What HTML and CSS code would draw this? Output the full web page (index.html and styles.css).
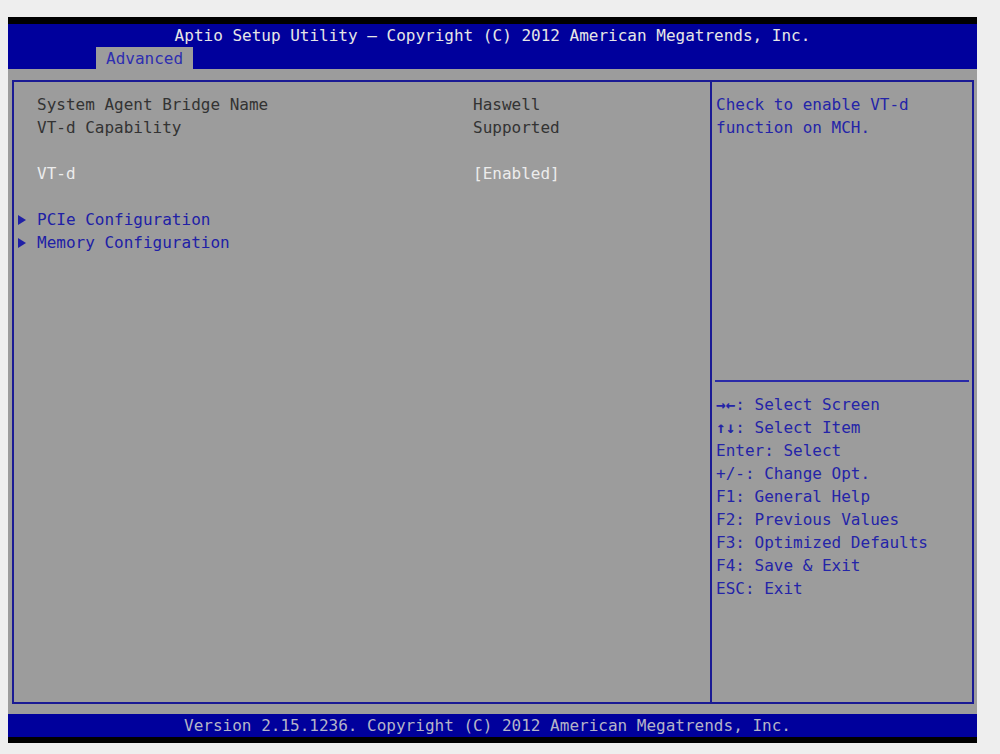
FILE: index.html
```html
<!DOCTYPE html>
<html lang="en">
<head>
    <meta charset="UTF-8">
    <title>Aptio Setup Utility - Advanced</title>
    <link rel="stylesheet" href="styles.css">
</head>
<body>
    <div id="screen">
        <div id="header">
            <div id="title">Aptio Setup Utility &ndash; Copyright (C) 2012 American Megatrends, Inc.</div>
            <div id="tabs">
                <div class="tab active">Advanced</div>
            </div>
        </div>

        <div id="main">
            <div id="frame">
                <div id="items">
                    <div class="row">
                        <span class="label">System Agent Bridge Name</span>
                        <span class="value">Haswell</span>
                    </div>
                    <div class="row">
                        <span class="label">VT-d Capability</span>
                        <span class="value">Supported</span>
                    </div>
                    <div class="row blank"></div>
                    <div class="row selected">
                        <span class="label">VT-d</span>
                        <span class="value">[Enabled]</span>
                    </div>
                    <div class="row blank"></div>
                    <div class="row submenu">
                        <span class="arrow"></span><span class="label">PCIe Configuration</span>
                    </div>
                    <div class="row submenu">
                        <span class="arrow"></span><span class="label">Memory Configuration</span>
                    </div>
                </div>

                <div id="side">
                    <div id="help">
                        Check to enable VT-d<br>
                        function on MCH.
                    </div>
                    <div id="keys">
                        <div><b>&rarr;&larr;</b>: Select Screen</div>
                        <div><b>&uarr;&darr;</b>: Select Item</div>
                        <div>Enter: Select</div>
                        <div>+/-: Change Opt.</div>
                        <div>F1: General Help</div>
                        <div>F2: Previous Values</div>
                        <div>F3: Optimized Defaults</div>
                        <div>F4: Save &amp; Exit</div>
                        <div>ESC: Exit</div>
                    </div>
                </div>
            </div>
        </div>

        <div id="footer">Version 2.15.1236. Copyright (C) 2012 American Megatrends, Inc.</div>
    </div>
</body>
</html>
```

FILE: styles.css
```css
body {
    margin: 0;
    padding: 17px 0 0 8px;
    background: #eeeeee;
    font-family: 'DejaVu Sans Mono', 'Liberation Mono', monospace;
    font-size: 16px;
    line-height: 23px;
}

#screen {
    width: 969px;
    display: flex;
    flex-direction: column;
}

#header {
    background: #00009c;
    border-top: 7px solid #000;
    height: 45px;
    display: flex;
    flex-direction: column;
}

#title {
    text-align: center;
    color: #e6e6e6;
}

#tabs {
    margin-top: auto;
    padding-left: 88px;
    display: flex;
}

.tab {
    height: 22px;
    line-height: 23px;
    padding: 0 10px;
    color: #2e2eb0;
}

.tab.active {
    background: #9c9c9c;
}

#main {
    background: #9c9c9c;
    height: 645px;
    padding: 11px 3px 10px 4px;
    box-sizing: border-box;
}

#frame {
    height: 100%;
    box-sizing: border-box;
    border: 2px solid #1a1a94;
    display: grid;
    grid-template-columns: 696px 1fr;
}

#items {
    padding: 11px 0 0 4px;
}

.row {
    display: flex;
    height: 23px;
    color: #333333;
}

.row .label {
    width: 436px;
    padding-left: 19px;
}

.row .value {
    white-space: pre;
}

.row.selected {
    color: #ececec;
}

.row.submenu {
    color: #2020a6;
}

.row.submenu .label {
    padding-left: 0;
}

.arrow {
    width: 19px;
    display: flex;
    align-items: center;
}

.arrow::before {
    content: "";
    border-left: 8px solid #2020a6;
    border-top: 5px solid transparent;
    border-bottom: 5px solid transparent;
}

#side {
    border-left: 2px solid #1a1a94;
    display: flex;
    flex-direction: column;
    color: #2424a8;
}

#help {
    padding: 11px 0 0 1px;
    height: 287px;
    border-bottom: 2px solid #2a2aa8;
    margin: 0 3px;
}

#keys {
    padding: 11px 0 0 4px;
}

#footer {
    background: #00009c;
    border-bottom: 6px solid #000;
    height: 23px;
    padding-right: 10px;
    text-align: center;
    color: #b4b4c8;
}
```
